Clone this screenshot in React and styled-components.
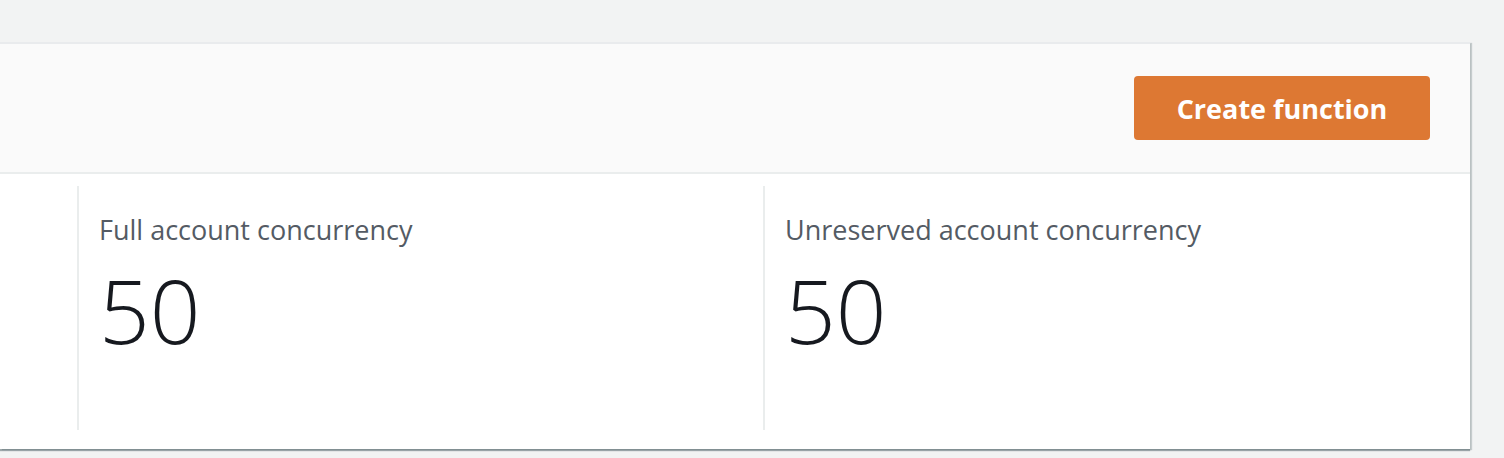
import React from "react";
import styled, { createGlobalStyle } from "styled-components";

const GlobalStyle = createGlobalStyle`
    html, body {
        margin: 0;
        padding: 0;
        background-color: #f2f3f3;
        font-family: "Open Sans", "Noto Sans", sans-serif;
    }
`

const stats = [
    { label: "Full account concurrency", value: "50" },
    { label: "Unreserved account concurrency", value: "50" },
]

const App = () => {
    return (
        <Page>
            <GlobalStyle />
            <Card>
                <Header>
                    <PrimaryButton>Create function</PrimaryButton>
                </Header>
                <Body>
                    {stats.map((stat) => (
                        <Column key={stat.label}>
                            <Label>{stat.label}</Label>
                            <Value>{stat.value}</Value>
                        </Column>
                    ))}
                </Body>
            </Card>
        </Page>
    )
}

const Page = styled.div`
    min-height: 458px;
    padding: 42px 34px 0 0;
    box-sizing: border-box;
`
const Card = styled.div`
    background-color: #fff;
    border-top: 2px solid #e9ebed;
    box-shadow: 0 2px 1px 0 rgba(0, 28, 36, 0.35), 2px 1px 1px 0 rgba(0, 28, 36, 0.18);
`
const Header = styled.div`
    display: flex;
    justify-content: flex-end;
    align-items: center;
    height: 128px;
    padding-right: 40px;
    background-color: #fafafa;
    border-bottom: 2px solid #eaeded;
`
const PrimaryButton = styled.button`
    width: 296px;
    height: 64px;
    border: none;
    border-radius: 4px;
    background-color: #dd7833;
    color: #fff;
    font-family: "Open Sans", sans-serif;
    font-weight: 700;
    font-size: 27px;
    cursor: pointer;
`
const Body = styled.div`
    display: grid;
    grid-template-columns: 1fr 1fr;
    padding: 12px 21px 19px 77px;
`
const Column = styled.div`
    height: 244px;
    border-left: 2px solid #eaeded;
    padding-left: 20px;
`
const Label = styled.div`
    margin-top: 26px;
    font-size: 27px;
    line-height: 36px;
    color: #545b64;
`
const Value = styled.div`
    margin-top: 12px;
    font-size: 89px;
    font-weight: 300;
    line-height: 100px;
    color: #16191f;
`

export default App;
